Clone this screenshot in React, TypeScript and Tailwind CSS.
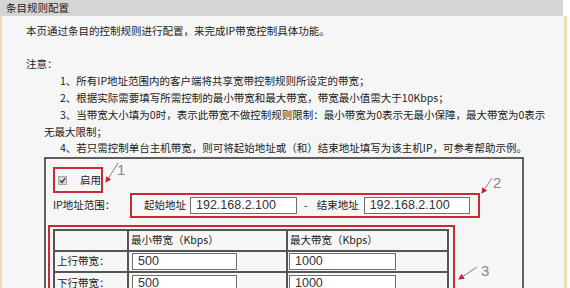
import React from 'react'

const cjk = { fontFamily: '"Noto Sans CJK SC", "Liberation Sans", sans-serif' }

function IpInput({ value, w }: { value: string; w: string }) {
  return (
    <div
      className={`${w} h-[17px] border border-[#6f6f6f] bg-white pl-[5px] flex items-center text-[12.5px] text-[#333] leading-none`}
      style={{ fontFamily: '"Liberation Sans", Arial, sans-serif' }}
    >
      {value}
    </div>
  )
}

function Annotations() {
  return (
    <svg className="absolute inset-0 pointer-events-none" width={570} height={288}>
      <defs>
        <marker id="head" markerWidth="6" markerHeight="6" refX="5" refY="3" orient="auto">
          <path d="M0,0 L6,3 L0,6 z" fill="#d0202c" />
        </marker>
      </defs>
      <line x1={118} y1={163} x2={106} y2={182} stroke="#8a7d8f" strokeWidth={1} markerEnd="url(#head)" />
      <line x1={492} y1={178} x2={482} y2={193} stroke="#8a7d8f" strokeWidth={1} markerEnd="url(#head)" />
      <line x1={477} y1={267} x2={459} y2={279} stroke="#8a7d8f" strokeWidth={1} markerEnd="url(#head)" />
      <g fill="#8e8399" fontFamily='"Liberation Sans", sans-serif' fontSize={15}>
        <text x={117} y={175}>1</text>
        <text x={493} y={188}>2</text>
        <text x={481} y={276}>3</text>
      </g>
    </svg>
  )
}

export default function App() {
  return (
    <div className="relative w-[570px] h-[288px] overflow-hidden bg-white text-[#222]" style={cjk}>
      <div className="flex flex-col h-full">
        <div className="h-[22px] w-[563px] bg-[#d5d5d5] flex items-center pl-[6px] text-[10.5px]">
          条目规则配置
        </div>
        <div className="flex-1 w-[567px] border-l-2 border-r-[3px] border-[#efdcb4] bg-[#f6f6f6] pt-[7px] text-[10.5px] leading-[16.8px] whitespace-nowrap">
          <div className="pl-[24px]">本页通过条目的控制规则进行配置，来完成IP带宽控制具体功能。</div>
          <div className="h-[16.8px]" />
          <div className="pl-[24px]">注意：</div>
          <div className="pl-[42px] indent-[16px]">1、所有IP地址范围内的客户端将共享宽带控制规则所设定的带宽；</div>
          <div className="pl-[42px] indent-[16px]">2、根据实际需要填写所需控制的最小带宽和最大带宽，带宽最小值需大于10Kbps；</div>
          <div className="pl-[42px] indent-[16px]">
            3、当带宽大小填为0时，表示此带宽不做控制规则限制：最小带宽为0表示无最小保障，最大带宽为0表示
            <br />
            无最大限制；
          </div>
          <div className="pl-[42px] indent-[16px]">4、若只需控制单台主机带宽，则可将起始地址或（和）结束地址填写为该主机IP，可参考帮助示例。</div>

          <div className="ml-[42px] w-[480px] h-[140px] border-2 border-[#5e5e5e] pt-[8px] pl-[2px]">
            <div className="ml-[5px] w-[50px] h-[26px] border-2 border-[#c62c35] flex items-center pl-[3px]">
              <span className="w-[9px] h-[9px] bg-[#d9d9d9] border border-[#a5a5a5] flex items-center justify-center">
                <svg width="7" height="7" viewBox="0 0 7 7">
                  <path d="M1 3.5 L3 5.5 L6.2 1.2" stroke="#333" strokeWidth="1.3" fill="none" />
                </svg>
              </span>
              <span className="ml-[13px]">启用</span>
            </div>
            <div className="flex items-center ml-[5px]">
              <span className="w-[77px]">IP地址范围：</span>
              <div className="w-[350px] h-[25px] border-2 border-[#c62c35] flex items-center pl-[12px]">
                <span>起始地址</span>
                <div className="ml-[4px]">
                  <IpInput value="192.168.2.100" w="w-[107px]" />
                </div>
                <span className="ml-[7px]">-</span>
                <span className="ml-[9px]">结束地址</span>
                <div className="ml-[5px]">
                  <IpInput value="192.168.2.100" w="w-[106px]" />
                </div>
              </div>
            </div>
            <div className="mt-[7px] w-[407px] h-[80px] border-2 border-b-0 border-[#c62c35] pt-[2px] pl-[3px]">
              <div className="w-[396px] border-2 border-[#555]">
                <div className="flex h-[21px] border-b-2 border-[#555]">
                  <div className="w-[74px] border-r-2 border-[#555]" />
                  <div className="w-[159px] border-r-2 border-[#555] flex items-center pl-[2px]">最小带宽（Kbps）</div>
                  <div className="flex-1 flex items-center pl-[2px]">最大带宽（Kbps）</div>
                </div>
                <div className="flex h-[21px] border-b-2 border-[#555]">
                  <div className="w-[74px] border-r-2 border-[#555] flex items-center pl-[2px]">上行带宽：</div>
                  <div className="w-[159px] border-r-2 border-[#555] flex items-center pl-[3px]">
                    <IpInput value="500" w="w-[105px]" />
                  </div>
                  <div className="flex-1 flex items-center pl-[1px]">
                    <IpInput value="1000" w="w-[107px]" />
                  </div>
                </div>
                <div className="flex h-[21px]">
                  <div className="w-[74px] border-r-2 border-[#555] flex items-center pl-[2px]">下行带宽：</div>
                  <div className="w-[159px] border-r-2 border-[#555] flex items-center pl-[3px]">
                    <IpInput value="500" w="w-[105px]" />
                  </div>
                  <div className="flex-1 flex items-center pl-[1px]">
                    <IpInput value="1000" w="w-[107px]" />
                  </div>
                </div>
              </div>
            </div>
          </div>
        </div>
      </div>
      <Annotations />
    </div>
  )
}
